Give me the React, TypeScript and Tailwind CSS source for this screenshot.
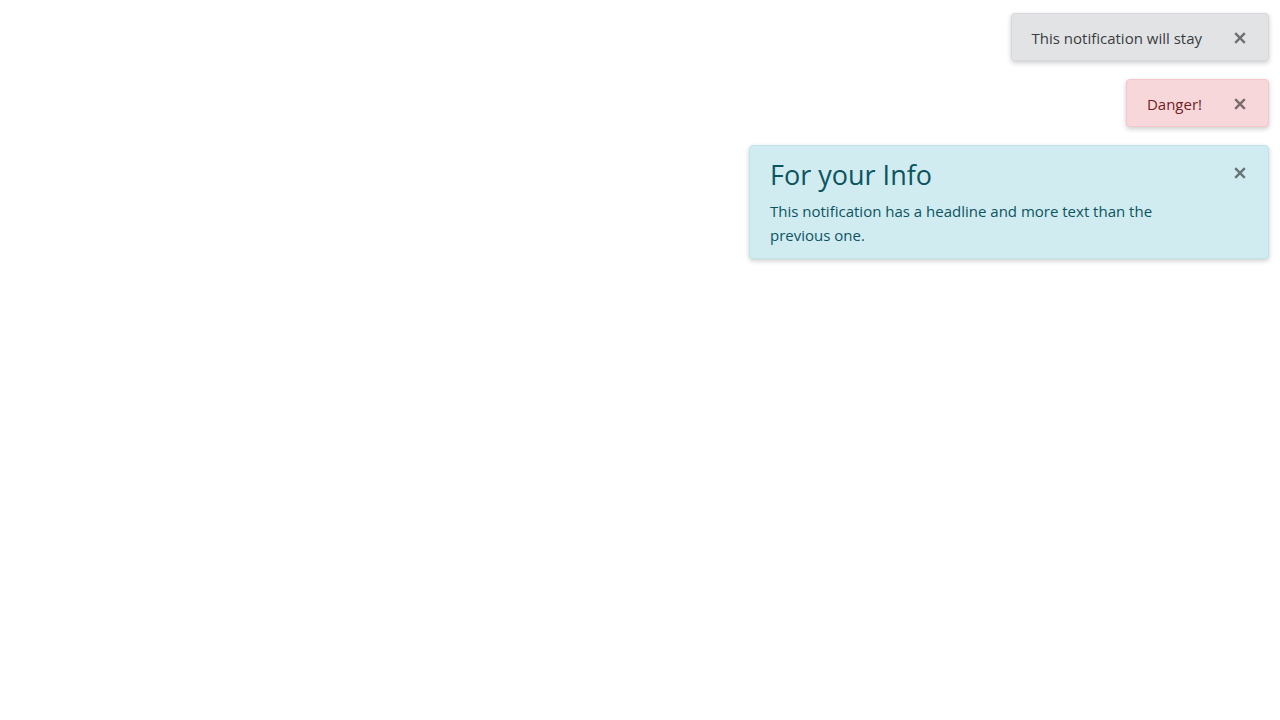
import React from "react";

const font = { fontFamily: '"Segoe UI", "Open Sans", "Noto Sans", sans-serif' };

function Close({ className = "" }: { className?: string }) {
  return (
    <button className={`flex h-[12px] w-[12px] items-center justify-center opacity-50 ${className}`} aria-label="Close">
      <svg width="12" height="12" viewBox="0 0 12 12" fill="none" stroke="#000" strokeWidth="2.4" strokeLinecap="butt">
        <path d="M1.2 1.2 L10.8 10.8 M10.8 1.2 L1.2 10.8" />
      </svg>
    </button>
  );
}

export default function App() {
  return (
    <div className="min-h-screen w-full bg-white" style={font}>
      <div className="flex flex-col items-end gap-[18px] pt-[13px] pr-[11px]">
        <div className="flex h-[48px] items-center rounded-[4px] border border-[#d6d8db] bg-[#e2e3e5] pl-[20px] pr-[22px] text-[15px] leading-[24px] text-[#383d41] shadow-[0_2px_5px_rgba(0,0,0,0.2)]">
          <span className="pt-[2px]">This notification will stay</span>
          <Close className="ml-[32px] mt-[2px]" />
        </div>
        <div className="flex h-[48px] items-center rounded-[4px] border border-[#f5c6cb] bg-[#f8d7da] pl-[20px] pr-[22px] text-[15px] leading-[24px] text-[#721c24] shadow-[0_2px_5px_rgba(0,0,0,0.2)]">
          <span className="pt-[2px]">Danger!</span>
          <Close className="ml-[32px] mt-[2px]" />
        </div>
        <div className="relative w-[520px] rounded-[4px] border border-[#bee5eb] bg-[#d1ecf1] pl-[20px] pr-[20px] pt-[12px] pb-[11px] text-[#0c5460] shadow-[0_2px_5px_rgba(0,0,0,0.2)]">
          <div className="text-[27px] leading-[34px]">For your Info</div>
          <p className="mt-[7px] w-[420px] text-[15px] leading-[24px]">
            This notification has a headline and more text than the previous one.
          </p>
          <Close className="absolute right-[22px] top-[21px]" />
        </div>
      </div>
    </div>
  );
}
